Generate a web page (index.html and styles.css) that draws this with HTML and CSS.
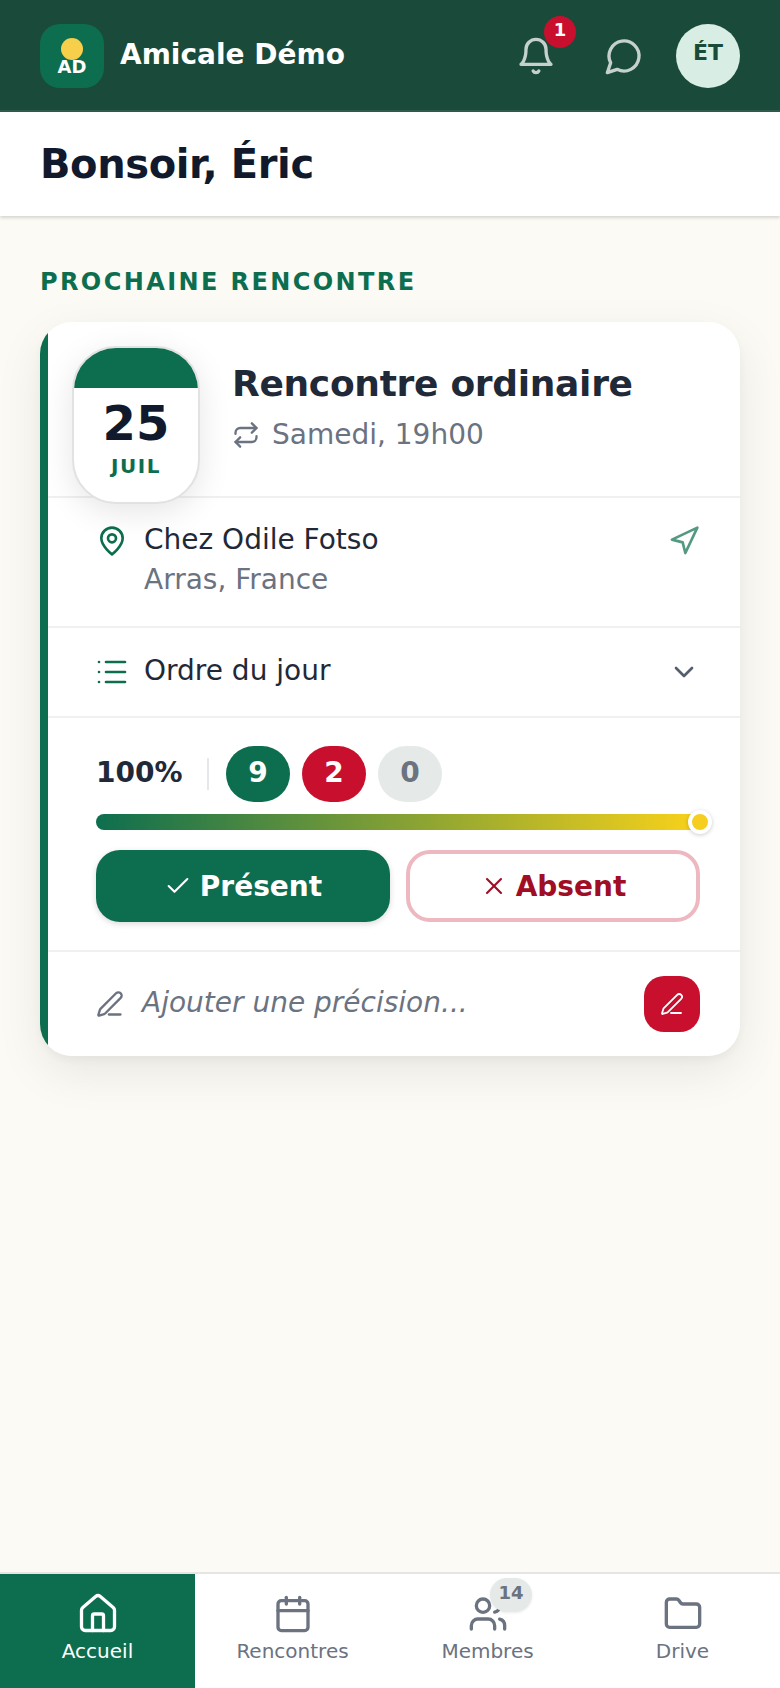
FILE: index.html
```html
<!DOCTYPE html>
<html lang="fr">
<head>
  <meta charset="UTF-8">
  <meta name="viewport" content="width=device-width, initial-scale=1.0">
  <title>Amicale Démo</title>
  <link rel="stylesheet" href="styles.css">
</head>
<body>
  <header class="topbar">
    <div class="logo"><span class="logo-sun"></span><span class="logo-text">AD</span></div>
    <div class="brand">Amicale Démo</div>
    <button class="top-btn bell-btn">
      <svg class="ico ico-40" viewBox="0 0 24 24"><path d="M6 8a6 6 0 0 1 12 0c0 7 3 9 3 9H3s3-2 3-9"/><path d="M10.3 21a1.94 1.94 0 0 0 3.4 0"/></svg>
      <span class="bell-badge">1</span>
    </button>
    <button class="top-btn chat-btn">
      <svg class="ico ico-40" viewBox="0 0 24 24"><path d="M7.9 20A9 9 0 1 0 4 16.1L2 22Z"/></svg>
    </button>
    <div class="avatar"><span>ÉT</span></div>
  </header>

  <div class="greeting"><h1>Bonsoir, Éric</h1></div>

  <main class="content">
    <h2 class="section-label">PROCHAINE RENCONTRE</h2>

    <section class="card">
      <div class="card-head row">
        <div class="date-tile">
          <div class="date-band"></div>
          <div class="date-day">25</div>
          <div class="date-month">JUIL</div>
        </div>
        <div class="head-text">
          <h3>Rencontre ordinaire</h3>
          <p class="recur">
            <svg class="ico ico-28" viewBox="0 0 24 24"><path d="m17 2 4 4-4 4"/><path d="M3 11v-1a4 4 0 0 1 4-4h14"/><path d="m7 22-4-4 4-4"/><path d="M21 13v1a4 4 0 0 1-4 4H3"/></svg>
            Samedi, 19h00
          </p>
        </div>
      </div>

      <div class="place row">
        <svg class="ico ico-32 green" viewBox="0 0 24 24"><path d="M20 10c0 6-8 12-8 12s-8-6-8-12a8 8 0 0 1 16 0Z"/><circle cx="12" cy="10" r="3"/></svg>
        <div class="place-text">
          <div class="place-name">Chez Odile Fotso</div>
          <div class="place-city">Arras, France</div>
        </div>
        <svg class="ico ico-32 green faded" viewBox="0 0 24 24"><polygon points="3 11 22 2 13 21 11 13 3 11"/></svg>
      </div>

      <div class="agenda row">
        <svg class="ico ico-32 green list-ico" viewBox="0 0 32 32"><path d="M10 6h19"/><path d="M10 16h19"/><path d="M10 26h19"/><path d="M3 6h.01"/><path d="M3 16h.01"/><path d="M3 26h.01"/></svg>
        <span class="agenda-label">Ordre du jour</span>
        <svg class="ico ico-32 slate" viewBox="0 0 24 24"><path d="m6 9 6 6 6-6"/></svg>
      </div>

      <div class="attendance row">
        <div class="stats">
          <span class="pct">100%</span>
          <span class="stats-sep"></span>
          <span class="pill pill-yes">9</span>
          <span class="pill pill-no">2</span>
          <span class="pill pill-none">0</span>
        </div>
        <div class="bar"><span class="bar-knob"></span></div>
        <div class="answers">
          <button class="answer answer-yes">
            <svg class="ico ico-28 thin" viewBox="0 0 24 24"><path d="M20 6 9 17l-5-5"/></svg>
            Présent
          </button>
          <button class="answer answer-no">
            <svg class="ico ico-28 thin" viewBox="0 0 24 24"><path d="M18 6 6 18"/><path d="m6 6 12 12"/></svg>
            Absent
          </button>
        </div>
      </div>

      <div class="note">
        <svg class="ico ico-28 grey" viewBox="0 0 24 24"><path d="M11 21h10"/><path d="M21.174 6.812a1 1 0 0 0-3.986-3.987L3.842 16.174a2 2 0 0 0-.5.83l-1.321 4.352a.5.5 0 0 0 .623.622l4.353-1.32a2 2 0 0 0 .83-.497z"/></svg>
        <span class="note-text">Ajouter une précision...</span>
        <button class="note-btn">
          <svg class="ico ico-24 thin" viewBox="0 0 24 24"><path d="M11 21h10"/><path d="M21.174 6.812a1 1 0 0 0-3.986-3.987L3.842 16.174a2 2 0 0 0-.5.83l-1.321 4.352a.5.5 0 0 0 .623.622l4.353-1.32a2 2 0 0 0 .83-.497z"/></svg>
        </button>
      </div>
    </section>
  </main>

  <nav class="tabs">
    <a class="tab tab-active">
      <svg class="ico ico-44 home-ico" viewBox="0 0 24 24"><path d="M15 21v-8a1 1 0 0 0-1-1h-4a1 1 0 0 0-1 1v8"/><path d="M3 10a2 2 0 0 1 .709-1.528l7-5.999a2 2 0 0 1 2.582 0l7 5.999A2 2 0 0 1 21 10v9a2 2 0 0 1-2 2H5a2 2 0 0 1-2-2z"/></svg>
      <span>Accueil</span>
    </a>
    <a class="tab">
      <svg class="ico ico-40" viewBox="0 0 24 24"><path d="M8 2v4"/><path d="M16 2v4"/><rect x="3" y="4" width="18" height="18" rx="2"/><path d="M3 10h18"/></svg>
      <span>Rencontres</span>
    </a>
    <a class="tab">
      <svg class="ico ico-40" viewBox="0 0 24 24"><path d="M16 21v-2a4 4 0 0 0-4-4H6a4 4 0 0 0-4 4v2"/><circle cx="9" cy="7" r="4"/><path d="M22 21v-2a4 4 0 0 0-3-3.87"/><path d="M16 3.13a4 4 0 0 1 0 7.75"/></svg>
      <span>Membres</span>
      <b class="tab-badge">14</b>
    </a>
    <a class="tab">
      <svg class="ico ico-40" viewBox="0 0 24 24"><path d="M20 20a2 2 0 0 0 2-2V8a2 2 0 0 0-2-2h-7.9a2 2 0 0 1-1.69-.9L9.6 3.9A2 2 0 0 0 7.93 3H4a2 2 0 0 0-2 2v13a2 2 0 0 0 2 2Z"/></svg>
      <span>Drive</span>
    </a>
  </nav>
</body>
</html>
```

FILE: styles.css
```css
* {
  box-sizing: border-box;
}

body {
  margin: 0;
  min-height: 1688px;
  display: flex;
  flex-direction: column;
  font-family: "DejaVu Sans", sans-serif;
  background: #fbfaf5;
  color: #1f2937;
}

button {
  font-family: inherit;
  border: 0;
  background: none;
  padding: 0;
}

h1, h2, h3, p {
  margin: 0;
}

.ico {
  flex: none;
  display: block;
  fill: none;
  stroke: currentColor;
  stroke-width: 2;
  stroke-linecap: round;
  stroke-linejoin: round;
}

.ico-44 { width: 44px; height: 44px; }
.ico-40 { width: 40px; height: 40px; }
.ico-32 { width: 32px; height: 32px; }
.ico-28 { width: 28px; height: 28px; }
.ico-24 { width: 24px; height: 24px; }
.thin { stroke-width: 1.8; }
.green { color: #0d6e4f; }
.faded { opacity: 0.7; }
.slate { color: #555e6e; }
.grey { color: #6b7280; }

/* top bar */
.topbar {
  height: 112px;
  display: flex;
  align-items: center;
  padding: 2px 40px 0;
  background: #1a4a3a;
  border-bottom: 2px solid #2f5b4c;
  color: #fff;
}

.logo {
  position: relative;
  width: 64px;
  height: 64px;
  border-radius: 20px;
  background: #0d6e4f;
}

.logo-sun {
  position: absolute;
  left: 21px;
  top: 14px;
  width: 22px;
  height: 22px;
  border-radius: 50%;
  background: #f8cf4b;
}

.logo-text {
  position: absolute;
  left: 0;
  right: 0;
  top: 31px;
  text-align: center;
  font-size: 18px;
  line-height: 24px;
  font-weight: 700;
}

.brand {
  margin-left: 16px;
  flex: 1;
  font-size: 28px;
  font-weight: 700;
  padding-bottom: 4px;
}

.top-btn {
  position: relative;
  width: 40px;
  height: 40px;
  color: rgba(255, 255, 255, 0.75);
}

.chat-btn {
  margin: 0 32px 0 48px;
}

.bell-badge {
  position: absolute;
  left: 28px;
  top: -20px;
  width: 32px;
  height: 32px;
  border-radius: 50%;
  background: #c8102e;
  color: #fff;
  font-size: 18px;
  font-weight: 700;
  line-height: 28px;
  text-align: center;
}

.avatar {
  width: 64px;
  height: 64px;
  border-radius: 50%;
  background: #d8ede3;
  color: #1a4a3a;
  font-size: 22px;
  font-weight: 700;
  text-align: center;
  line-height: 58px;
}

/* greeting */
.greeting {
  height: 104px;
  display: flex;
  align-items: center;
  padding: 0 40px;
  background: #fff;
  box-shadow: 0 2px 3px rgba(0, 0, 0, 0.15);
}

.greeting h1 {
  font-size: 40px;
  font-weight: 700;
  letter-spacing: -0.4px;
  color: #111a2c;
}

/* main */
.content {
  flex: 1;
  padding: 40px 40px 0;
}

.section-label {
  font-size: 24px;
  line-height: 52px;
  margin-bottom: 14px;
  font-weight: 700;
  letter-spacing: 2.4px;
  color: #0d6e4f;
}

/* green strip is painted, so the rounded corners clip it instead of bending it */
.card {
  padding-left: 8px;
  background: linear-gradient(90deg, #0d6e4f 8px, #fff 8px);
  border-radius: 32px;
  box-shadow: 0 4px 8px rgba(0, 0, 0, 0.04), 0 16px 48px rgba(0, 0, 0, 0.08);
}

.row {
  border-bottom: 2px solid #f0f0f0;
}

.card-head {
  height: 176px;
  display: flex;
  padding: 24px 0 0 24px;
}

.date-tile {
  position: relative;
  z-index: 1;
  flex: none;
  width: 128px;
  height: 158px;
  overflow: hidden;
  text-align: center;
  background: #fff;
  border: 2px solid #e2e2e2;
  border-radius: 44px;
  box-shadow: 0 8px 32px rgba(0, 0, 0, 0.1);
}

.date-band {
  height: 40px;
  background: #0d6e4f;
}

.date-day {
  margin-top: 7px;
  font-size: 48px;
  line-height: 56px;
  font-weight: 700;
  color: #111a2c;
}

.date-month {
  font-size: 20px;
  line-height: 30px;
  font-weight: 700;
  letter-spacing: 1.5px;
  color: #0d6e4f;
}

.head-text {
  margin-left: 32px;
  padding-top: 13px;
}

.head-text h3 {
  font-size: 36px;
  line-height: 50px;
  font-weight: 700;
  letter-spacing: -0.3px;
  color: #1f2937;
}

.recur {
  display: flex;
  align-items: center;
  gap: 12px;
  margin-top: 6px;
  font-size: 28px;
  line-height: 40px;
  color: #6b7280;
}

.place {
  height: 130px;
  display: flex;
  align-items: flex-start;
  gap: 16px;
  padding: 22px 40px 0 48px;
}

.place .ico {
  margin-top: 5px;
}

.place-text {
  flex: 1;
  font-size: 28px;
  line-height: 40px;
}

.place-name {
  color: #1f2937;
}

.place-city {
  color: #6b7280;
}

.agenda {
  height: 90px;
  display: flex;
  align-items: center;
  gap: 16px;
  padding: 0 40px 0 48px;
}

.agenda-label {
  flex: 1;
  font-size: 28px;
  padding-bottom: 4px;
}

.list-ico {
  stroke-width: 2.6;
}

.attendance {
  height: 234px;
  padding: 28px 40px 0 48px;
}

.stats {
  display: flex;
  align-items: center;
  gap: 12px;
}

.pct {
  font-size: 28px;
  font-weight: 700;
  width: 85px;
  padding-bottom: 4px;
}

.stats-sep {
  width: 2px;
  height: 32px;
  margin: 0 5px 0 14px;
  background: #e5e7eb;
}

.pill {
  width: 64px;
  height: 56px;
  border-radius: 28px;
  text-align: center;
  font-size: 28px;
  line-height: 54px;
  font-weight: 700;
  color: #fff;
}

.pill-yes { background: #0d6e4f; }
.pill-no { background: #c8102e; }
.pill-none { background: #e5e9e7; color: #6b7280; }

.bar {
  position: relative;
  height: 16px;
  margin-top: 12px;
  border-radius: 8px;
  background: linear-gradient(90deg, #0d6e4f, #f9d21a);
}

.bar-knob {
  position: absolute;
  right: -12px;
  top: -4px;
  width: 24px;
  height: 24px;
  border: 4px solid #fff;
  border-radius: 50%;
  background: #f5ce1f;
  box-shadow: 0 1px 4px rgba(0, 0, 0, 0.2);
}

.answers {
  display: grid;
  grid-template-columns: 1fr 1fr;
  gap: 16px;
  margin-top: 20px;
}

.answer {
  height: 72px;
  display: flex;
  align-items: center;
  justify-content: center;
  gap: 8px;
  border-radius: 24px;
  font-size: 28px;
  font-weight: 700;
}

.answer-yes {
  background: #0d6e4f;
  color: #fff;
  box-shadow: 0 2px 6px rgba(0, 0, 0, 0.15);
}

.answer-no {
  border: 4px solid #edb8c0;
  background: #fff;
  color: #a00d25;
}

.note {
  height: 104px;
  display: flex;
  align-items: center;
  gap: 18px;
  padding: 0 40px 0 48px;
}

.note-text {
  flex: 1;
  font-size: 28px;
  font-style: italic;
  padding-bottom: 4px;
  color: #6b7280;
}

.note-btn {
  width: 56px;
  height: 56px;
  display: flex;
  align-items: center;
  justify-content: center;
  border-radius: 20px;
  background: #c8102e;
  color: #fff;
}

/* bottom tabs */
.tabs {
  height: 116px;
  display: grid;
  grid-template-columns: repeat(4, 1fr);
  background: #fff;
  border-top: 2px solid #e5e5e5;
}

.tab {
  position: relative;
  display: flex;
  flex-direction: column;
  align-items: center;
  padding-top: 20px;
  font-size: 20px;
  line-height: 30px;
  color: #6b7280;
}

.tab span {
  margin-top: 2px;
}

.tab-active {
  padding-top: 18px;
  background: #0d6e4f;
  color: #fff;
}

.home-ico {
  stroke-width: 1.8;
  margin-bottom: -2px;
}

.tab-badge {
  position: absolute;
  left: 100px;
  top: 4px;
  width: 42px;
  height: 34px;
  border-radius: 17px;
  background: #e5e9e7;
  box-shadow: 0 1px 3px rgba(0, 0, 0, 0.08);
  font-size: 18px;
  line-height: 30px;
  text-align: center;
}
```
